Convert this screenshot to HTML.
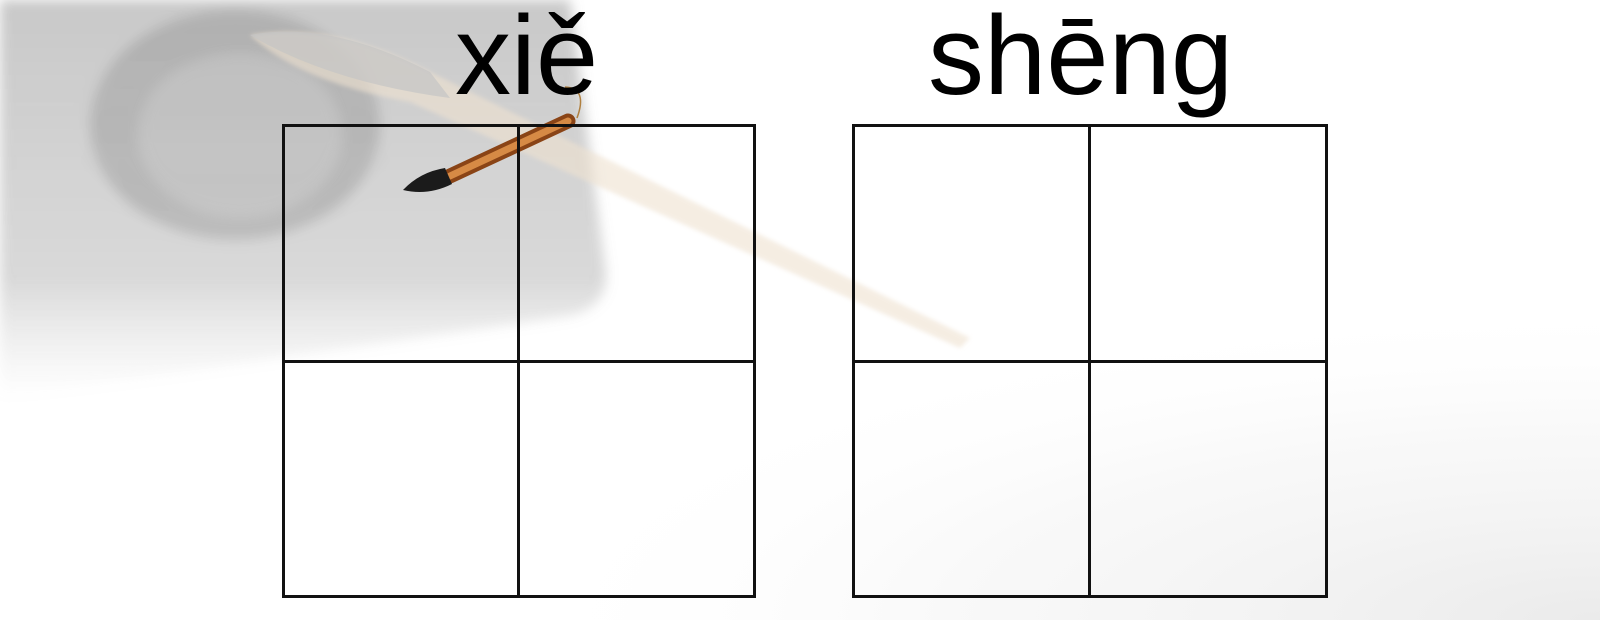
<!DOCTYPE html>
<html><head><meta charset="utf-8"><style>
html,body{margin:0;padding:0}
body{width:1600px;height:620px;position:relative;overflow:hidden;background:#fff;font-family:"Liberation Sans",sans-serif}
.t{position:absolute;font-size:112px;line-height:1;color:#000;top:0px}
.g{position:absolute;border:3px solid #111;box-sizing:border-box}
.v{position:absolute;background:#111;width:3px}
.h{position:absolute;background:#111;height:3px}
</style></head><body>
<svg width="1600" height="620" style="position:absolute;left:0;top:0">
<defs>
<filter id="b"><feGaussianBlur stdDeviation="6"/></filter>
<filter id="b2"><feGaussianBlur stdDeviation="2"/></filter>
<linearGradient id="fade" x1="0" y1="0" x2="0" y2="1">
<stop offset="0" stop-color="#777" stop-opacity=".4"/>
<stop offset=".7" stop-color="#888" stop-opacity=".32"/>
<stop offset="1" stop-color="#aaa" stop-opacity="0"/></linearGradient>
<radialGradient id="sw" cx="1" cy="1" r="1">
<stop offset="0" stop-color="#ddd" stop-opacity=".6"/>
<stop offset=".6" stop-color="#eee" stop-opacity=".35"/>
<stop offset="1" stop-color="#fff" stop-opacity="0"/></radialGradient>
</defs>
<rect x="500" y="300" width="1100" height="320" fill="url(#sw)"/>
<g filter="url(#b)">
<path d="M0 0 H570 L605 265 Q612 306 570 316 L0 398 Z" fill="url(#fade)"/>
<ellipse cx="235" cy="125" rx="145" ry="115" fill="#444" opacity=".18"/>
<ellipse cx="240" cy="135" rx="100" ry="80" fill="#ddd" opacity=".3"/>
</g>
<path d="M250 35 Q330 20 430 72 L970 338 L960 348 L410 102 Q300 82 250 35Z" fill="#efe2d0" opacity=".6" filter="url(#b2)"/>
<path d="M250 35 Q330 20 430 72 L450 98 Q330 82 250 35Z" fill="#c4c4c4" opacity=".7"/>
<g>
<path d="M565 87 Q588 88 577 118" stroke="#b08040" fill="none" stroke-width="1.5"/>
<line x1="450" y1="176" x2="568" y2="121" stroke="#8a4416" stroke-width="15" stroke-linecap="round"/>
<line x1="450" y1="176" x2="568" y2="121" stroke="#d68a45" stroke-width="7" stroke-linecap="round"/>
<path d="M445 168 Q420 172 403 190 Q428 196 452 184Z" fill="#1b1b1b"/>
</g>
</svg>
<div class="t" style="left:455px">xiě</div>
<div class="t" style="left:928px">shēng</div>
<div class="g" style="left:282px;top:124px;width:474px;height:474px"></div>
<div class="v" style="left:517px;top:124px;height:474px"></div>
<div class="h" style="left:282px;top:360px;width:474px"></div>
<div class="g" style="left:852px;top:124px;width:476px;height:474px"></div>
<div class="v" style="left:1088px;top:124px;height:474px"></div>
<div class="h" style="left:852px;top:360px;width:476px"></div>
</body></html>
